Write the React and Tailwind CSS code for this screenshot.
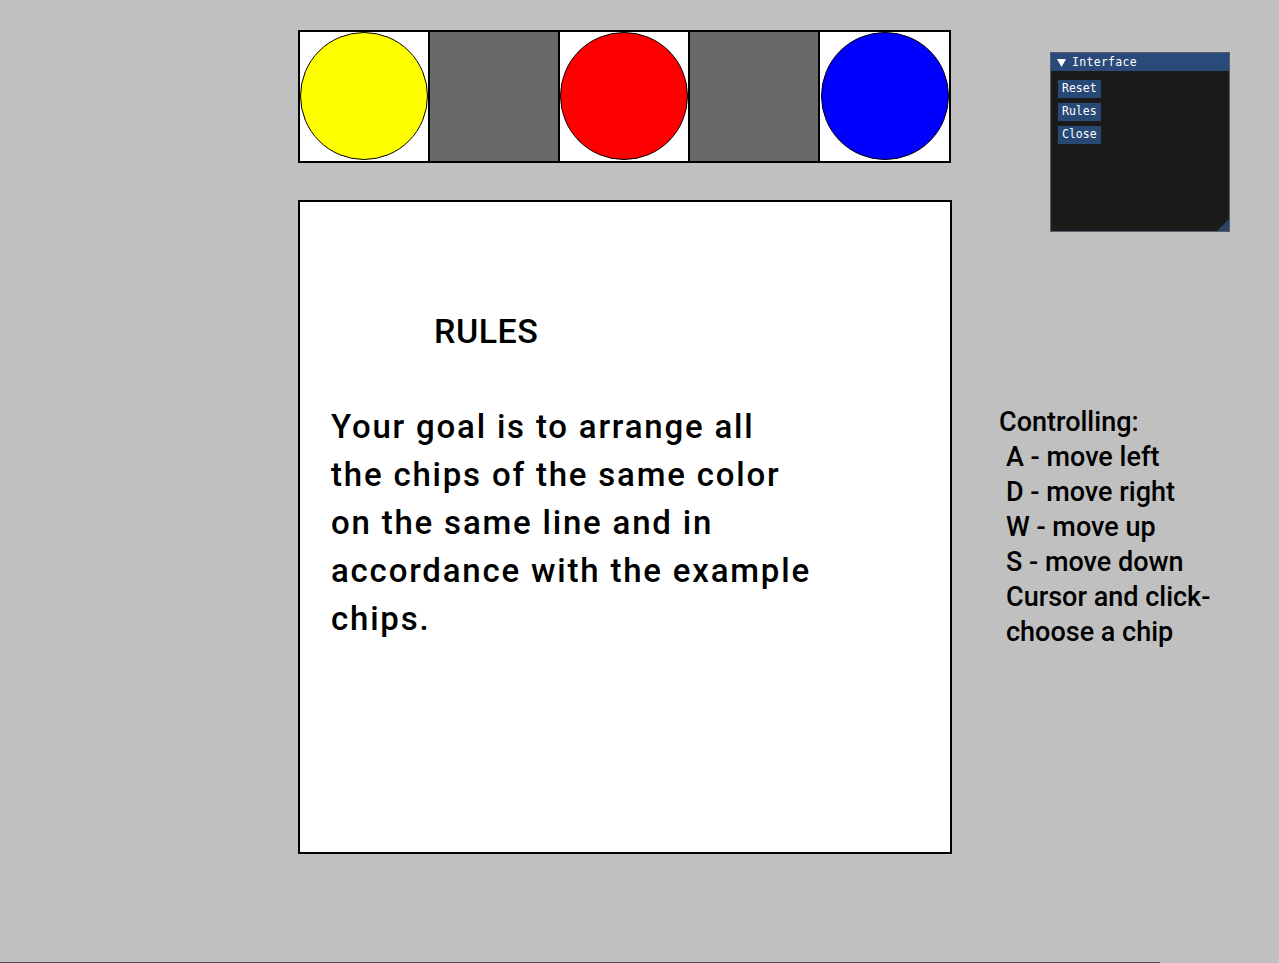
export default function App() {
  const chips = ["yellow", "gray", "red", "gray", "blue"];
  const body = "font-['Roboto',sans-serif]";
  return (
    <div className="relative w-[1279px] h-[963px] bg-[#c0c0c0] overflow-hidden flex">
      {/* Left column: example chips + rules */}
      <div className="pl-[298px] pt-[30px] flex flex-col">
        <div className="flex border-2 border-black w-[653px] h-[133px] bg-white">
          {chips.map((c, i) => (
            <div
              key={i}
              className={
                "h-full flex items-start justify-center shrink-0 " +
                (i === 0 ? "w-[128px] " : i === 4 ? "w-[131px] border-l-2 border-black " : "w-[130px] border-l-2 border-black ") +
                (c === "gray" ? "bg-[#696969]" : "bg-white")
              }
            >
              {c === "yellow" && <div className="w-[128px] h-[128px] rounded-full border border-black bg-[#ffff00]" />}
              {c === "red" && <div className="w-[128px] h-[128px] rounded-full border border-black bg-[#ff0000]" />}
              {c === "blue" && <div className="w-[128px] h-[128px] rounded-full border border-black bg-[#0000ff]" />}
            </div>
          ))}
        </div>

        <div className={"mt-[37px] w-[654px] h-[654px] border-2 border-black bg-white pt-[105px] pl-[31px] text-black " + body}>
          <div className="pl-[103px] text-[34px] leading-[48px] font-medium tracking-[0.5px]">RULES</div>
          <div className="mt-[48px] text-[33px] leading-[48px] font-medium tracking-[1.8px]">
            <div>Your goal is to arrange all</div>
            <div>the chips of the same color</div>
            <div>on the same line and in</div>
            <div>accordance with the example</div>
            <div>chips.</div>
          </div>
        </div>
      </div>

      {/* Right: controls text */}
      <div className={"ml-[47px] pt-[405px] text-[27px] leading-[35px] text-black font-medium " + body}>
        <div>Controlling:</div>
        <div className="pl-[7px]">A - move left</div>
        <div className="pl-[7px]">D - move right</div>
        <div className="pl-[7px]">W - move up</div>
        <div className="pl-[7px]">S - move down</div>
        <div className="pl-[7px]">Cursor and click-</div>
        <div className="pl-[7px]">choose a chip</div>
      </div>

      {/* ImGui floating window */}
      <div className="absolute left-[1050px] top-[52px] w-[180px] h-[180px] border border-[#5a5d6c] bg-[#1b1b1b] flex flex-col font-['DejaVu_Sans_Mono',monospace] text-[11.5px] text-white">
        <div className="h-[18px] bg-[#2a4a7a] flex items-center pl-[6px] pt-px gap-[6px]">
          <svg width="9" height="8" viewBox="0 0 9 8">
            <polygon points="0,0 9,0 4.5,8" fill="#ffffff" />
          </svg>
          <span className="tracking-[0.3px]">Interface</span>
        </div>
        <div className="flex flex-col items-start gap-[5px] pl-[7px] pt-[9px]">
          <div className="h-[18px] px-[4px] bg-[#284876] flex items-center">Reset</div>
          <div className="h-[18px] px-[4px] bg-[#284876] flex items-center">Rules</div>
          <div className="h-[18px] px-[4px] bg-[#284876] flex items-center">Close</div>
        </div>
        <svg className="absolute right-0 bottom-0" width="12" height="12" viewBox="0 0 12 12">
          <polygon points="12,0 12,12 0,12" fill="#2c4466" />
        </svg>
      </div>

      {/* bottom edge line */}
      <div className="absolute left-0 bottom-0 w-[1160px] h-px bg-[#4a4f55]" />
    </div>
  );
}
